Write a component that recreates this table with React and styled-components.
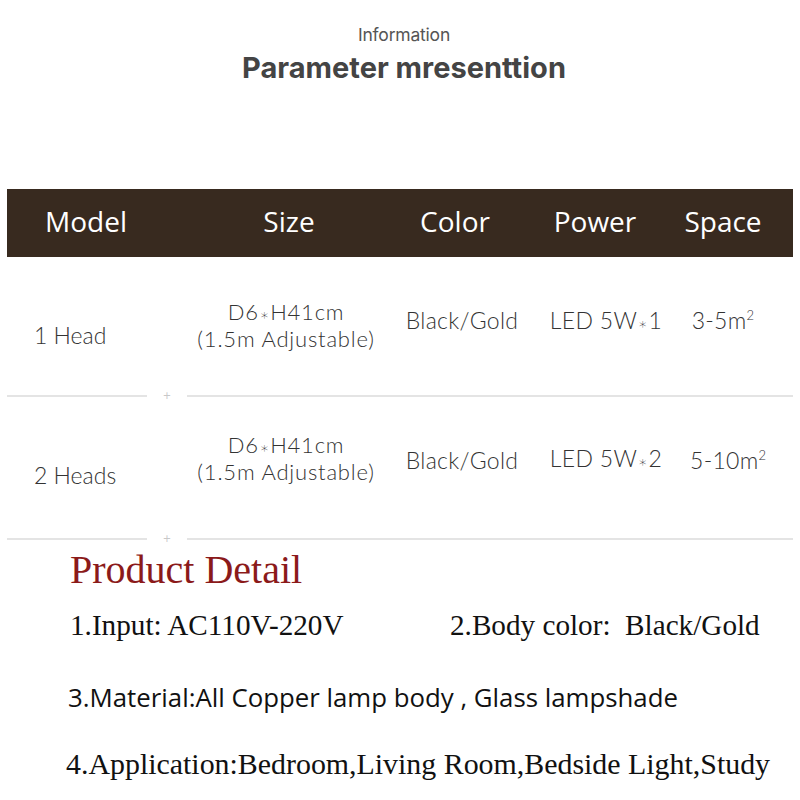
import React from 'react';
import styled, { createGlobalStyle } from 'styled-components';

const GlobalStyle = createGlobalStyle`
  body {
    margin: 0;
    background: #fff;
  }
`;

const headers = [
  { label: 'Model', width: 158 },
  { label: 'Size', width: 248 },
  { label: 'Color', width: 84 },
  { label: 'Power', width: 196 },
  { label: 'Space', width: 60 },
];

const rows = [
  {
    id: 1,
    model: '1 Head',
    sizeTop: 42,
    color: 'Black/Gold',
    heads: 1,
    powerTop: 51,
    space: '3-5m',
    height: 138,
  },
  {
    id: 2,
    model: '2 Heads',
    sizeTop: 35,
    color: 'Black/Gold',
    heads: 2,
    powerTop: 49,
    space: '5-10m',
    height: 141,
  },
];

const Times = () => <Star>{'\u2217'}</Star>;

const App = () => (
  <>
    <GlobalStyle />
    <Page>
      <Intro>
        <Kicker>Information</Kicker>
        <Title>Parameter mresenttion</Title>
      </Intro>

      <HeaderBar>
        {headers.map(h => (
          <HeadCell key={h.label} w={h.width}>
            {h.label}
          </HeadCell>
        ))}
      </HeaderBar>

      {rows.map(row => (
        <React.Fragment key={row.id}>
          <Row h={row.height}>
            <ModelCell>{row.model}</ModelCell>
            <SizeCell w={232} top={row.sizeTop}>
              <div>
                D6
                <Times />
                H41cm
              </div>
              <div>(1.5m Adjustable)</div>
            </SizeCell>
            <Cell w={120} top={51}>
              {row.color}
            </Cell>
            <Cell w={168} top={row.powerTop}>
              LED 5W
              <Times />
              {row.heads}
            </Cell>
            <Cell w={66} top={51}>
              {row.space}
              <Sup>2</Sup>
            </Cell>
          </Row>
          <Divider>
            <Line w={140} />
            <Plus>+</Plus>
            <Line />
          </Divider>
        </React.Fragment>
      ))}

      <Detail>
        <DetailTitle>Product Detail</DetailTitle>
        <ItemPair>
          <Item>1.Input: AC110V-220V</Item>
          <Item>2.Body color:&nbsp; Black/Gold</Item>
        </ItemPair>
        <Item sans gap={36} shift={-2}>
          3.Material:All Copper lamp body , Glass lampshade
        </Item>
        <Item gap={31} shift={-4} size={29.9}>
          4.Application:Bedroom,Living Room,Bedside Light,Study
        </Item>
      </Detail>
    </Page>
  </>
);

export default App;

const Page = styled.div`
  width: 800px;
  height: 800px;
  overflow: hidden;
  background: #fff;
`;

const Intro = styled.div`
  display: flex;
  flex-direction: column;
  align-items: center;
  padding-top: 24px;
  padding-left: 8px;
`;

const Kicker = styled.div`
  font-family: Inter, 'Open Sans', sans-serif;
  font-size: 17.5px;
  line-height: 22px;
  color: #555;
  letter-spacing: -0.2px;
`;

const Title = styled.h1`
  margin: 5px 0 0;
  font-family: Inter, 'Open Sans', sans-serif;
  font-weight: 700;
  font-size: 29px;
  line-height: 34px;
  color: #444;
`;

const HeaderBar = styled.div`
  display: flex;
  height: 68px;
  margin: 104px 7px 0;
  background: #382a1f;
  align-items: center;
`;

const HeadCell = styled.div`
  width: ${p => p.w}px;
  flex: none;
  display: flex;
  justify-content: center;
  font-family: 'Open Sans', sans-serif;
  font-size: 28px;
  color: #fff;
  white-space: nowrap;
  margin-top: -4px;
`;

const Row = styled.div`
  display: flex;
  height: ${p => p.h}px;
  margin: 0 7px;
  font-family: Lato, 'Noto Sans', sans-serif;
  font-weight: 300;
  font-size: 23px;
  line-height: 25px;
  color: #333;
`;

const ModelCell = styled.div`
  width: 163px;
  flex: none;
  padding: 66px 0 0 27px;
  box-sizing: border-box;
  white-space: nowrap;
`;

const Cell = styled.div`
  width: ${p => p.w}px;
  flex: none;
  padding-top: ${p => p.top}px;
  text-align: center;
  white-space: nowrap;
  letter-spacing: 0.3px;
`;

const SizeCell = styled(Cell)`
  display: flex;
  flex-direction: column;
  align-items: center;
  font-size: 22px;
  line-height: 26.5px;
  letter-spacing: 0.8px;
`;

const Star = styled.span`
  font-family: 'DejaVu Sans', sans-serif;
  font-size: 15px;
  line-height: 0;
  color: #333;
  letter-spacing: 0;
  margin: 0 1px;
`;

const Sup = styled.sup`
  font-size: 13px;
  vertical-align: 9px;
  line-height: 0;
`;

const Divider = styled.div`
  display: flex;
  align-items: center;
  height: 2px;
  margin: 0 7px;
`;

const Line = styled.div`
  height: 2px;
  background: #e4e4e4;
  ${p => (p.w ? `width: ${p.w}px; flex: none;` : 'flex: 1;')}
`;

const Plus = styled.span`
  width: 40px;
  text-align: center;
  font-family: 'DejaVu Sans', sans-serif;
  font-size: 10px;
  line-height: 10px;
  color: #c8c8c8;
`;

const Detail = styled.div`
  padding: 7px 0 0 70px;
`;

const DetailTitle = styled.h2`
  margin: 0;
  font-family: 'Liberation Serif', serif;
  font-weight: 400;
  font-size: 40px;
  line-height: 46px;
  color: #8b1a1a;
`;

const ItemPair = styled.div`
  display: grid;
  grid-template-columns: 380px 1fr;
  margin-top: 14px;
`;

const Item = styled.div`
  margin-top: ${p => p.gap || 0}px;
  margin-left: ${p => p.shift || 0}px;
  font-family: ${p =>
    p.sans ? "'Open Sans', sans-serif" : "'Liberation Serif', serif"};
  font-size: ${p => p.size || (p.sans ? 25.8 : 29.2)}px;
  line-height: 36px;
  color: #111;
  white-space: nowrap;
`;
